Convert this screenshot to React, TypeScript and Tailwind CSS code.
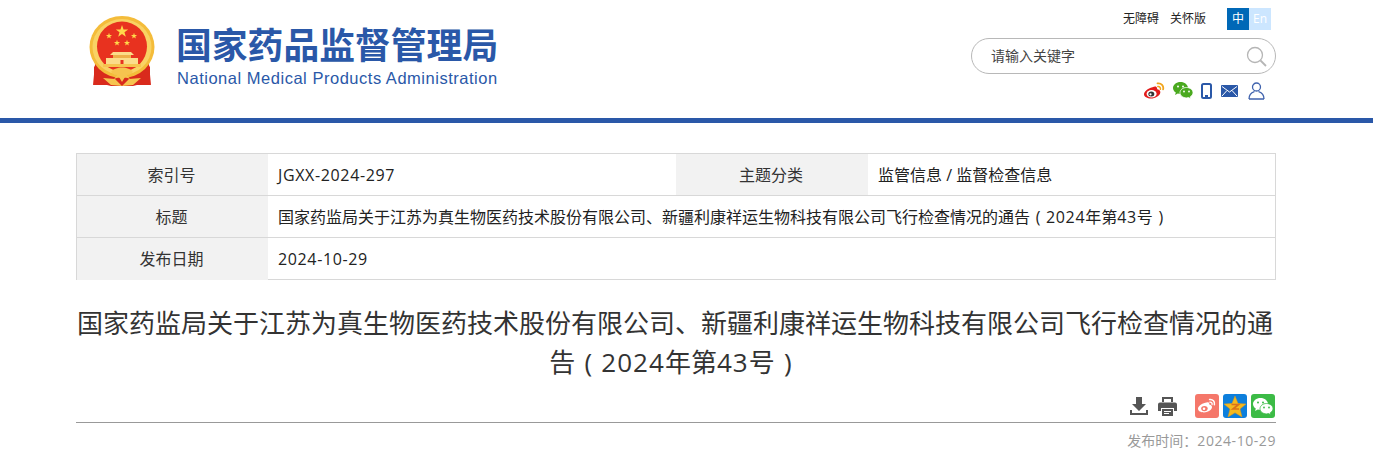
const cjk = { fontFamily: '"Open Sans", "Noto Sans CJK SC", sans-serif' };

function Star({ cx, cy, r, fill = '#ffd84a' }: { cx: number; cy: number; r: number; fill?: string }) {
  const pts: string[] = [];
  for (let i = 0; i < 10; i++) {
    const rad = i % 2 === 0 ? r : r * 0.4;
    const a = (Math.PI / 5) * i - Math.PI / 2;
    pts.push(`${(cx + rad * Math.cos(a)).toFixed(2)},${(cy + rad * Math.sin(a)).toFixed(2)}`);
  }
  return <polygon points={pts.join(' ')} fill={fill} />;
}

function Emblem() {
  return (
    <svg width="66" height="70" viewBox="0 0 66 70">
      {/* ribbons behind the ring */}
      <path d="M6 48 L4 69 L14 68 L22 70 L44 70 L52 68 L62 69 L60 48 Z" fill="#d92a1c" />
      <ellipse cx="33" cy="31" rx="32.500" ry="31" fill="#f4bc3a" />
      <ellipse cx="33" cy="31" rx="29.500" ry="28" fill="#f9d264" />
      <circle cx="33" cy="30.500" r="25" fill="#e8321f" />
      <Star cx={33} cy={15.500} r={6.500} />
      <Star cx={20} cy={20} r={3.200} />
      <Star cx={45} cy={20} r={3.200} />
      <Star cx={28} cy={27} r={3.200} />
      <Star cx={38} cy={27} r={3.200} />
      {/* gate */}
      <path d="M24 36 H42 L45 39 H21 Z" fill="#fbdc8a" />
      <rect x="24" y="39" width="18" height="3" fill="#eeb04a" />
      <rect x="17" y="42" width="32" height="6" fill="#fbdc8a" />
      <rect x="31.500" y="44" width="3" height="4" fill="#e8321f" />
      <rect x="14" y="48" width="38" height="3" fill="#f6c44f" />
      {/* ribbon folds and flowers */}
      <path d="M5 50 C11 56 18 61 26 63 L20 69 L5 69 Z" fill="#d92a1c" />
      <path d="M61 50 C55 56 48 61 40 63 L46 69 L61 69 Z" fill="#d92a1c" />
      <path d="M22 56 C26 50 40 50 44 56 L40 59 L37 58 L41 63 L36 61 L33 66 L30 61 L25 63 L29 58 L26 59 Z" fill="#f6c44f" />
      <path d="M14 62 L26 63 L33 70 L22 69 Z M52 62 L40 63 L33 70 L44 69 Z" fill="#f6c44f" />
    </svg>
  );
}

function WeiboIcon() {
  return (
    <svg width="21" height="18" viewBox="0 0 21 18">
      <path d="M8.500 5.200c2.800-1.200 4.300-.6 4.600 1 .1.600 0 1 .2 1.100 2.300.6 3.300 1.800 3 3.400-.6 3.200-5.200 5.800-9.300 5.800C3.300 16.500 0 14.800 0 12.200c0-2.400 3.600-6 8.500-7z" fill="#e21b1b" />
      <ellipse cx="7.600" cy="11.800" rx="5" ry="3.700" fill="#fff" />
      <ellipse cx="7.300" cy="12" rx="3" ry="2.500" fill="#333" />
      <circle cx="6.500" cy="12.300" r="1.100" fill="#fff" />
      <path d="M13.500 1.400c3.800-.6 6.500 2.500 5.600 6" fill="none" stroke="#f1a51d" strokeWidth="1.800" strokeLinecap="round" />
      <path d="M13.800 4.500c1.800-.3 3 1.100 2.600 2.800" fill="none" stroke="#f1a51d" strokeWidth="1.500" strokeLinecap="round" />
    </svg>
  );
}

function WechatIcon({ color = '#4aa91f', cut = '#fff' }: { color?: string; cut?: string }) {
  return (
    <svg width="20" height="17" viewBox="0 0 20 17">
      <path d="M7.500 0C3.400 0 0 2.700 0 6c0 1.900 1.100 3.500 2.800 4.600L2.100 13l2.700-1.400c.8.200 1.700.4 2.700.4 4.100 0 7.500-2.700 7.500-6S11.600 0 7.500 0z" fill={color} />
      <path d="M13.500 5.500C9.900 5.500 7 7.800 7 10.700s2.900 5.200 6.500 5.200c.7 0 1.400-.1 2.100-.3l2.300 1.200-.6-2C18.900 13.800 20 12.300 20 10.700c0-2.900-2.900-5.200-6.500-5.200z" fill={color} stroke={cut} strokeWidth="0.800" />
      <circle cx="5" cy="4.500" r="1" fill={cut} />
      <circle cx="10" cy="4.500" r="1" fill={cut} />
      <circle cx="11" cy="9.500" r="0.900" fill={cut} />
      <circle cx="16" cy="9.500" r="0.900" fill={cut} />
    </svg>
  );
}

// Latin runs set a little wider than the installed font
function Lat({ children }: { children: React.ReactNode }) {
  return <span className="tracking-[0.04em]">{children}</span>;
}

// Full-width bracket with the glyph centred in its square
function Paren({ children }: { children: React.ReactNode }) {
  return <span className="inline-block w-[1em] text-center">{children}</span>;
}

function Row({ label, children, label2, value2, last }: { label: string; children: React.ReactNode; label2?: string; value2?: React.ReactNode; last?: boolean }) {
  return (
    <div className={`flex h-[42px] items-center text-[16px] text-[#333] ${last ? '' : 'border-b border-[#d8d8d8]'}`}>
      <div className="flex h-full w-[191px] shrink-0 items-center justify-center bg-[#f2f2f2] pr-[2px]">{label}</div>
      <div className={`flex h-full items-center px-[10px] text-[#222] ${label2 ? 'w-[408px]' : 'flex-1'}`}>
        <span>{children}</span>
      </div>
      {label2 && (
        <>
          <div className="flex h-full w-[192px] shrink-0 items-center justify-center bg-[#f2f2f2] pr-[2px]">{label2}</div>
          <div className="flex h-full flex-1 items-center px-[10px] text-[#222]">
            <span>{value2}</span>
          </div>
        </>
      )}
    </div>
  );
}

export default function App() {
  return (
    <div className="h-[463px] overflow-hidden bg-white" style={cjk}>
      {/* Header */}
      <header className="h-[123px] border-b-[5px] border-[#2a58a8]">
        <div className="ml-[76px] flex h-[118px] w-[1200px] justify-between">
          <div className="flex">
            <div className="ml-[13px] mt-[16px]">
              <Emblem />
            </div>
            <div className="ml-[22px] mt-[20px]">
              <div
                className="-ml-[1px] h-[46px] w-[324px] text-[35.800px] leading-[46px] font-bold whitespace-nowrap text-[#2a58a8]"
                style={{ fontFamily: '"Noto Sans CJK SC", sans-serif' }}
              >
                国家药品监督管理局
              </div>
              <div
                className="mt-[2px] text-[16.500px] leading-[20px] tracking-[0.52px] whitespace-nowrap text-[#2a58a8]"
                style={{ fontFamily: '"Liberation Sans", sans-serif' }}
              >
                National Medical Products Administration
              </div>
            </div>
          </div>
          <div className="flex w-[305px] flex-col">
            <div className="mt-[8px] flex h-[22px] items-center justify-end pr-[5px] text-[12px] text-[#222]">
              <span>无障碍</span>
              <span className="ml-[11px]">关怀版</span>
              <span className="ml-[21px] flex h-[22px] w-[22px] items-center justify-center bg-[#0068b7] text-white">中</span>
              <span className="flex h-[22px] w-[22px] items-center justify-center bg-[#cce6ff] text-white">En</span>
            </div>
            <div className="mt-[8px] flex h-[36px] items-center justify-between rounded-full border border-[#b8b8b8] pr-[8px] pb-[2px] pl-[19px] text-[14px] text-[#444]">
              <span>请输入关键字</span>
              <svg className="mt-[2px]" width="21" height="21" viewBox="0 0 21 21" fill="none" stroke="#b5b5b5">
                <circle cx="9" cy="9" r="7.500" strokeWidth="1.300" />
                <path d="M14.500 14.500 L20 20" strokeWidth="1.800" />
              </svg>
            </div>
            <div className="mt-[7px] flex h-[19px] items-center justify-end pr-[11px]">
              <WeiboIcon />
              <span className="ml-[8px]"><WechatIcon /></span>
              <svg className="ml-[8px]" width="11" height="16" viewBox="0 0 11 16">
                <rect x="1" y="1" width="9" height="14" rx="1.500" fill="none" stroke="#2a58a8" strokeWidth="2" />
                <rect x="4" y="12" width="3" height="2" fill="#2a58a8" />
              </svg>
              <svg className="ml-[9px]" width="17" height="12" viewBox="0 0 17 12">
                <rect width="17" height="12" rx="1" fill="#2a58a8" />
                <path d="M1 1.500 L8.500 7 L16 1.500 M1 11 L6 5.500 M16 11 L11 5.500" fill="none" stroke="#fff" strokeWidth="1" />
              </svg>
              <svg className="ml-[10px]" width="17" height="18" viewBox="0 0 17 18" fill="none" stroke="#3f62ad" strokeWidth="1.300">
                <circle cx="8.500" cy="5" r="4" />
                <path d="M1 17 C1 11 5 10 6.500 9.500 M16 17 C16 11 12 10 10.500 9.500 M1 17 H16" />
              </svg>
            </div>
          </div>
        </div>
      </header>

      <main className="ml-[76px] w-[1200px]">
        {/* Info table */}
        <div className="mt-[30px] h-[127px] border border-[#d8d8d8]">
          <Row label="索引号" label2="主题分类" value2="监管信息 / 监督检查信息">
            <Lat>JGXX-2024-297</Lat>
          </Row>
          <Row label="标题">
            国家药监局关于江苏为真生物医药技术股份有限公司、新疆利康祥运生物科技有限公司飞行检查情况的通告<Paren>(</Paren>
            <Lat>2024</Lat>年第<Lat>43</Lat>号<Paren>)</Paren>
          </Row>
          <Row label="发布日期" last>
            <Lat>2024-10-29</Lat>
          </Row>
        </div>

        {/* Title */}
        <h1 className="mt-[24px] pr-[2px] text-center text-[26px] leading-[39px] text-[#333]">
          国家药监局关于江苏为真生物医药技术股份有限公司、新疆利康祥运生物科技有限公司飞行检查情况的通
          <br />
          告<Paren>(</Paren>
          <Lat>2024</Lat>年第<Lat>43</Lat>号<Paren>)</Paren>
        </h1>

        {/* Share bar */}
        <div className="mt-[12px] flex h-[29px] items-start justify-end border-b border-[#999] pr-[1px]">
          <svg className="mt-[3px]" width="18" height="18" viewBox="0 0 18 18" fill="#555">
            <path d="M6 0 H12 V7 H16 L9 14 L2 7 H6 Z" />
            <path d="M0 13 H2 V16 H16 V13 H18 V18 H0 Z" />
          </svg>
          <svg className="ml-[10px] mt-[3px]" width="19" height="19" viewBox="0 0 19 19" fill="#555">
            <path d="M4 0 H15 V5 H13 V2 H6 V5 H4 Z" />
            <path d="M2 5.500 H17 A2 2 0 0 1 19 7.500 V14 H16 V11 H3 V14 H0 V7.500 A2 2 0 0 1 2 5.500 Z" />
            <path d="M4 12 H15 V19 H4 Z M6 14 V15 H13 V14 Z M6 16 V17 H11 V16 Z" fillRule="evenodd" />
          </svg>
          <div className="ml-[18px] flex h-[24px] w-[24px] items-center justify-center rounded-[3px] bg-[#f5776a]">
            <svg width="18" height="16" viewBox="0 0 21 18">
              <path d="M8.500 5.200c2.800-1.200 4.300-.6 4.600 1 .1.600 0 1 .2 1.100 2.300.6 3.300 1.800 3 3.400-.6 3.200-5.200 5.800-9.300 5.800C3.300 16.500 0 14.800 0 12.200c0-2.400 3.600-6 8.500-7z" fill="#fff" />
              <ellipse cx="7.500" cy="12" rx="3.800" ry="3" fill="#f5776a" />
              <circle cx="7" cy="12.200" r="1.500" fill="#fff" />
              <path d="M13.500 1.400c3.800-.6 6.500 2.500 5.600 6" fill="none" stroke="#fff" strokeWidth="1.800" strokeLinecap="round" />
              <path d="M13.800 4.500c1.800-.3 3 1.100 2.600 2.800" fill="none" stroke="#fff" strokeWidth="1.500" strokeLinecap="round" />
            </svg>
          </div>
          <div className="ml-[4px] flex h-[24px] w-[24px] items-center justify-center rounded-[3px] bg-[#0d7fdc]">
            <svg width="22" height="21" viewBox="0 0 22 21">
              <polygon points="11,0 14,7.500 22,8 16,13 18,21 11,16.800 4,21 6,13 0,8 8,7.500" fill="#f5b91e" stroke="#e29a12" strokeWidth="0.500" />
              <path d="M7.500 8.500 H14.500 L9 13 H15" fill="none" stroke="#d9711a" strokeWidth="1.700" />
            </svg>
          </div>
          <div className="ml-[4px] flex h-[24px] w-[24px] items-center justify-center rounded-[3px] bg-[#3cbb46]">
            <WechatIcon color="#fff" cut="#3cbb46" />
          </div>
        </div>

        <div className="mt-[9px] text-right text-[14px] leading-[18px] text-[#999]">
          发布时间：<Lat>2024-10-29</Lat>
        </div>
      </main>
    </div>
  );
}
